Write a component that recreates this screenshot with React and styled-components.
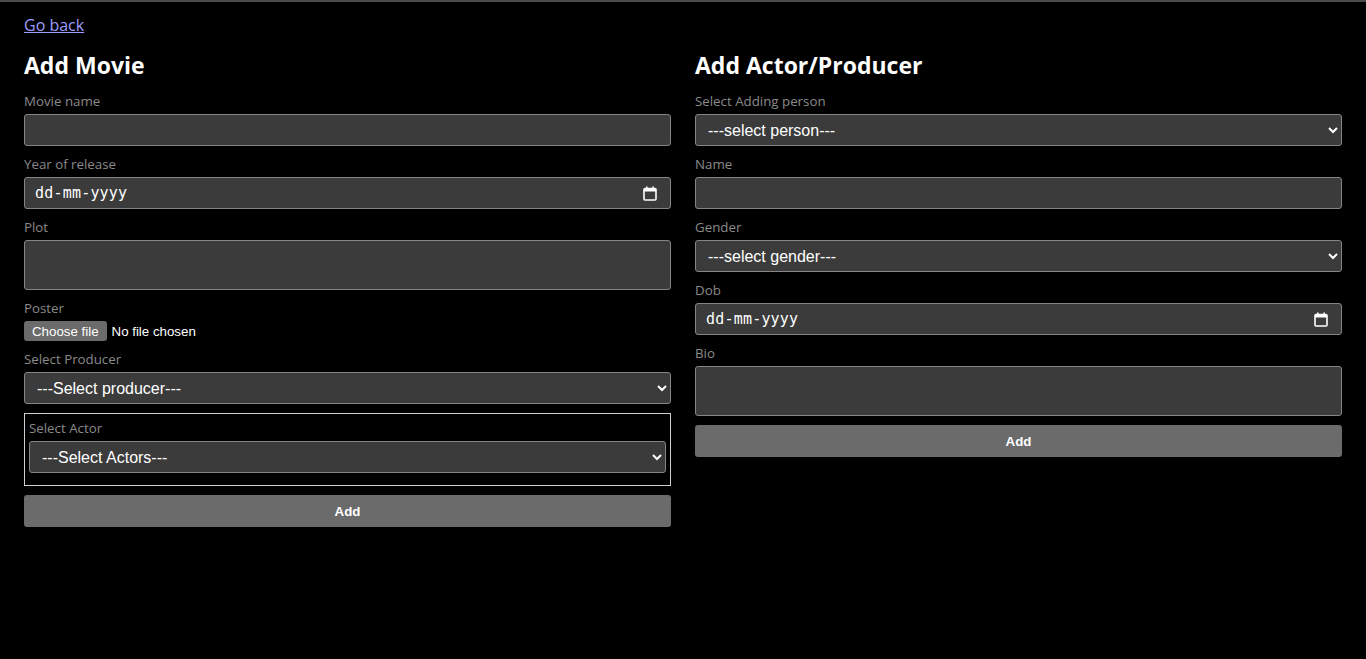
import React from "react";
import styled, { createGlobalStyle } from "styled-components";

const GlobalStyle = createGlobalStyle`
  :root {
    color-scheme: dark;
  }
  html, body {
    margin: 0;
    background: #000;
  }
  body {
    border-top: 2px solid #4a4a4a;
    font-family: "Open Sans", "Noto Sans", sans-serif;
    color: #fff;
  }
`;

function CalendarIcon() {
  return (
    <CalIcon width="14" height="15" viewBox="0 0 14 15" aria-hidden="true">
      <rect x="1" y="2.5" width="12" height="11.5" rx="1" fill="none" stroke="#fff" strokeWidth="1.6" />
      <rect x="1" y="2.5" width="12" height="3" fill="#fff" />
      <rect x="3" y="0.5" width="1.6" height="3" fill="#fff" />
      <rect x="9.4" y="0.5" width="1.6" height="3" fill="#fff" />
    </CalIcon>
  );
}

function DateField() {
  return (
    <DateWrap>
      <DateInput type="text" placeholder="dd-mm-yyyy" />
      <CalendarIcon />
    </DateWrap>
  );
}

function FilePicker() {
  return (
    <FileRow>
      <HiddenFile type="file" />
      <FileButton>Choose file</FileButton>
      <FileStatus>No file chosen</FileStatus>
    </FileRow>
  );
}

function App() {
  return (
    <>
      <GlobalStyle />
      <Page>
        <BackLink href="#">Go back</BackLink>
        <Columns>
          <Column>
            <Title>Add Movie</Title>
            <Form>
              <Field>
                <Label>Movie name</Label>
                <TextInput type="text" />
              </Field>
              <Field>
                <Label>Year of release</Label>
                <DateField />
              </Field>
              <Field>
                <Label>Plot</Label>
                <TextArea />
              </Field>
              <Field>
                <Label>Poster</Label>
                <FilePicker />
              </Field>
              <Field>
                <Label>Select Producer</Label>
                <Select defaultValue="">
                  <option value="">---Select producer---</option>
                </Select>
              </Field>
              <ActorBox>
                <Label>Select Actor</Label>
                <Select defaultValue="">
                  <option value="">---Select Actors---</option>
                </Select>
              </ActorBox>
              <SubmitButton type="button">Add</SubmitButton>
            </Form>
          </Column>
          <Column>
            <Title>Add Actor/Producer</Title>
            <Form>
              <Field>
                <Label>Select Adding person</Label>
                <Select defaultValue="">
                  <option value="">---select person---</option>
                </Select>
              </Field>
              <Field>
                <Label>Name</Label>
                <TextInput type="text" />
              </Field>
              <Field>
                <Label>Gender</Label>
                <Select defaultValue="">
                  <option value="">---select gender---</option>
                </Select>
              </Field>
              <Field>
                <Label>Dob</Label>
                <DateField />
              </Field>
              <Field>
                <Label>Bio</Label>
                <TextArea />
              </Field>
              <SubmitButton type="button">Add</SubmitButton>
            </Form>
          </Column>
        </Columns>
      </Page>
    </>
  );
}

const Page = styled.div`
  padding: 12px 24px 24px;
`;

const BackLink = styled.a`
  display: inline-block;
  font-size: 16px;
  line-height: 18px;
  color: #9e9eff;
  text-decoration: underline;
`;

const Columns = styled.div`
  display: grid;
  grid-template-columns: 1fr 1fr;
  gap: 24px;
  margin-top: 13px;
`;

const Column = styled.div`
  display: flex;
  flex-direction: column;
`;

const Title = styled.h2`
  margin: 0 0 11px;
  font-size: 23px;
  line-height: 32px;
  font-weight: 700;
  color: #fff;
`;

const Form = styled.form`
  display: flex;
  flex-direction: column;
  gap: 9px;
`;

const Field = styled.div`
  display: flex;
  flex-direction: column;
`;

const Label = styled.label`
  display: block;
  font-size: 13.3px;
  line-height: 19px;
  margin-bottom: 3px;
  color: #8a8a8a;
`;

const fieldBase = `
  box-sizing: border-box;
  width: 100%;
  margin: 0;
  background: #3b3b3b;
  border: 1px solid #858585;
  border-radius: 3px;
  color: #fff;
  outline: none;
`;

const TextInput = styled.input`
  ${fieldBase}
  height: 32px;
  padding: 0 10px;
  font-family: "Liberation Sans", Arial, sans-serif;
  font-size: 16px;
`;

const DateWrap = styled.div`
  position: relative;
  display: flex;
  align-items: center;
`;

const DateInput = styled.input`
  ${fieldBase}
  height: 32px;
  padding: 0 10px;
  font-family: "DejaVu Sans Mono", "Liberation Mono", monospace;
  font-size: 15px;
  letter-spacing: 0.2px;
  &::placeholder {
    color: #fff;
    opacity: 1;
  }
`;

const CalIcon = styled.svg`
  position: absolute;
  right: 14px;
  top: 9px;
  pointer-events: none;
`;

const TextArea = styled.textarea`
  ${fieldBase}
  display: block;
  height: 50px;
  resize: none;
  padding: 4px 10px;
  font-family: "Liberation Sans", Arial, sans-serif;
  font-size: 16px;
`;

const Select = styled.select`
  ${fieldBase}
  height: 32px;
  padding: 0 8px;
  font-family: "Liberation Sans", Arial, sans-serif;
  font-size: 16px;
`;

const FileRow = styled.label`
  display: flex;
  align-items: center;
  gap: 5px;
  height: 20px;
  font-family: "Liberation Sans", Arial, sans-serif;
  font-size: 13.3px;
  color: #fff;
  cursor: pointer;
`;

const HiddenFile = styled.input`
  display: none;
`;

const FileButton = styled.span`
  display: inline-flex;
  align-items: center;
  height: 20px;
  padding: 0 8px;
  border-radius: 3px;
  background: #6b6b6b;
  color: #fff;
`;

const FileStatus = styled.span`
  color: #fff;
`;

const ActorBox = styled.div`
  display: flex;
  flex-direction: column;
  border: 1px solid #cfcfcf;
  padding: 5px 4px 12px;
`;

const SubmitButton = styled.button`
  height: 32px;
  width: 100%;
  border: none;
  border-radius: 3px;
  background: #6b6b6b;
  color: #fff;
  font-family: "Liberation Sans", Arial, sans-serif;
  font-size: 13.3px;
  font-weight: 700;
  cursor: pointer;
`;

export default App;
